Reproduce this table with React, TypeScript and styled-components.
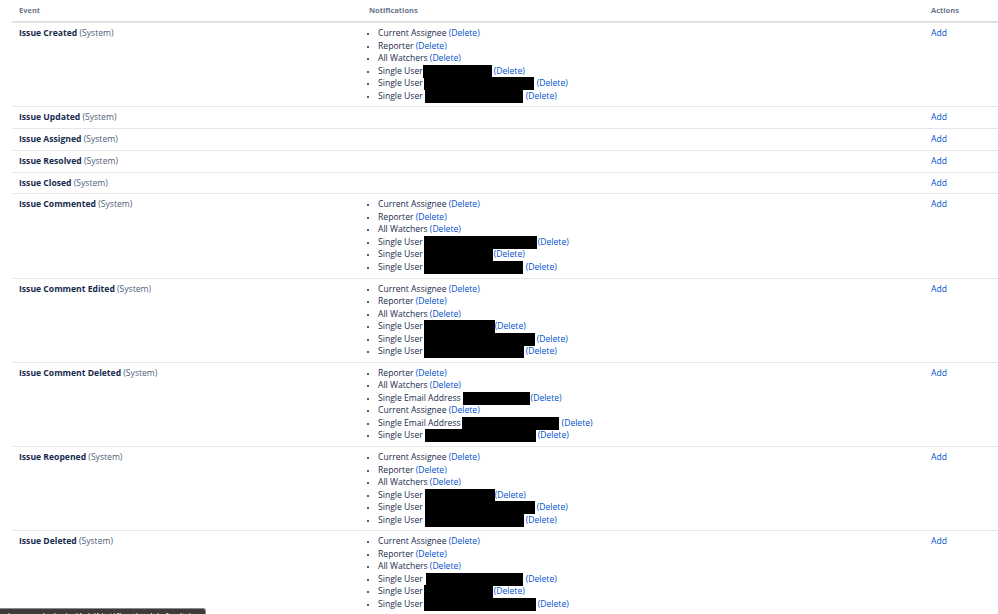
import React from "react";
import styled, { createGlobalStyle } from "styled-components";

const GlobalStyle = createGlobalStyle`
  html, body { margin: 0; padding: 0; background: #ffffff; }
  body { font-family: "Open Sans", "Noto Sans", sans-serif; color: #172b4d; }
`;

const Page = styled.div`
  padding-left: 12px;
`;

const Table = styled.table`
  border-collapse: collapse;
  width: 986px;
  table-layout: fixed;
`;

const HeadCell = styled.th<{ $w: number }>`
  width: ${(p) => p.$w}px;
  height: 22px;
  padding: 0 7px 2px;
  box-sizing: border-box;
  text-align: left;
  vertical-align: middle;
  font-size: 7.5px;
  font-weight: 700;
  color: #6b778c;
  border-bottom: 2px solid #dfe1e6;
`;

const Cell = styled.td`
  padding: 4px 7px 4.25px;
  vertical-align: top;
  border-bottom: 1px solid #e4e6ea;
  font-size: 8.6px;
  line-height: 12.5px;
  color: #172b4d;
`;

const EventName = styled.strong`
  font-weight: 700;
  color: #172b4d;
`;

const Sys = styled.span`
  color: #505f79;
`;

const List = styled.ul`
  margin: 0;
  padding: 0 0 0 9px;
  list-style: disc;
`;

const Item = styled.li`
  line-height: 12.5px;
  &::marker { font-size: 7px; }
`;

const Link = styled.a`
  color: #0052cc;
  text-decoration: none;
`;

const Redact = styled.span<{ $w: number; $ml: number; $mr: number }>`
  display: inline-block;
  width: ${(p) => p.$w}px;
  height: 12px;
  margin-left: ${(p) => p.$ml}px;
  margin-right: ${(p) => p.$mr}px;
  background: #000;
  box-shadow: 0 1px 0 #000;
  vertical-align: top;
`;

const StatusBubble = styled.div`
  position: fixed;
  left: 0;
  bottom: 0;
  width: 206px;
  height: 6px;
  overflow: hidden;
  background: #3b3b3b;
  border-top: 1px solid #8a8a8a;
  border-right: 1px solid #8a8a8a;
  border-top-right-radius: 3px;
  box-sizing: border-box;
`;

const StatusText = styled.div`
  padding: 2px 0 0 6px;
  font-size: 10px;
  line-height: 12px;
  color: #e8e8e8;
  white-space: nowrap;
`;

type Red = { w: number; ml: number; mr: number };
type Note = { label: string; red?: Red };
type Row = { name: string; notes: Note[] };

const A: Note = { label: "Current Assignee" };
const R: Note = { label: "Reporter" };
const W: Note = { label: "All Watchers" };
const U = (w: number, ml: number, mr: number): Note => ({ label: "Single User", red: { w, ml, mr } });
const E = (w: number, ml: number, mr: number): Note => ({ label: "Single Email Address", red: { w, ml, mr } });

const rows: Row[] = [
  { name: "Issue Created", notes: [A, R, W, U(69, 0, 2), U(110, 1, 3), U(98, 2, 3)] },
  { name: "Issue Updated", notes: [] },
  { name: "Issue Assigned", notes: [] },
  { name: "Issue Resolved", notes: [] },
  { name: "Issue Closed", notes: [] },
  { name: "Issue Commented", notes: [A, R, W, U(113, 1, 1), U(69, 1, 1), U(99, 1, 3)] },
  { name: "Issue Comment Edited", notes: [A, R, W, U(71, 1, 0), U(111, 1, 2), U(100, 1, 2)] },
  { name: "Issue Comment Deleted", notes: [R, W, E(67, 2, 1), A, E(97, 1, 3), U(111, 2, 2)] },
  { name: "Issue Reopened", notes: [A, R, W, U(70, 2, 0), U(110, 2, 2), U(99, 2, 2)] },
  { name: "Issue Deleted", notes: [A, R, W, U(97, 3, 3), U(69, 1, 1), U(112, 1, 2)] },
];

export default function App() {
  return (
    <Page>
      <GlobalStyle />
      <Table>
        <thead>
          <tr>
            <HeadCell $w={350}>Event</HeadCell>
            <HeadCell $w={562}>Notifications</HeadCell>
            <HeadCell $w={74}>Actions</HeadCell>
          </tr>
        </thead>
        <tbody>
          {rows.map((row) => (
            <tr key={row.name}>
              <Cell>
                <EventName>{row.name}</EventName> <Sys>(System)</Sys>
              </Cell>
              <Cell>
                {row.notes.length > 0 && (
                  <List>
                    {row.notes.map((n, i) => (
                      <Item key={i}>
                        {n.label}
                        {n.red ? (
                          <Redact $w={n.red.w} $ml={n.red.ml} $mr={n.red.mr} />
                        ) : (
                          " "
                        )}
                        <Link href="#">(Delete)</Link>
                      </Item>
                    ))}
                  </List>
                )}
              </Cell>
              <Cell>
                <Link href="#">Add</Link>
              </Cell>
            </tr>
          ))}
        </tbody>
      </Table>
      <StatusBubble>
        <StatusText>/secure/admin/AddNotification!default.jspa?schemeId=10000&amp;eventTypeIds=2</StatusText>
      </StatusBubble>
    </Page>
  );
}
